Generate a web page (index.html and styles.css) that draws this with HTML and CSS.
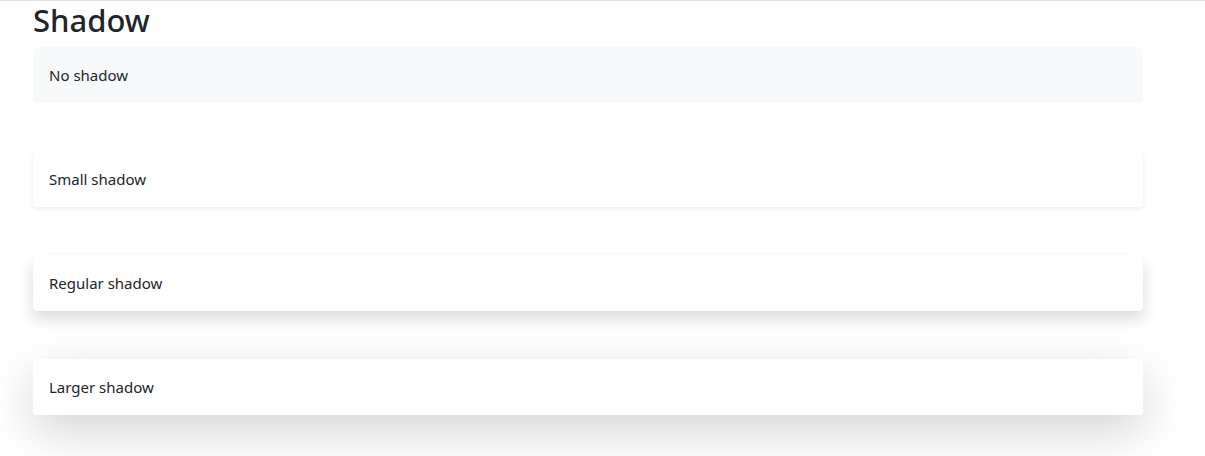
FILE: index.html
```html
<!DOCTYPE html>
<html lang="en">
<head>
    <meta charset="UTF-8">
    <meta name="viewport" content="width=device-width, initial-scale=1.0">
    <title>Shadow</title>
    <link rel="stylesheet" href="styles.css">
</head>
<body>
    <div class="page">
        <h2 class="title">Shadow</h2>
        <div class="box no-shadow">No shadow</div>
        <div class="box shadow-sm">Small shadow</div>
        <div class="box shadow">Regular shadow</div>
        <div class="box shadow-lg">Larger shadow</div>
    </div>
</body>
</html>
```
FILE: styles.css
```css
body {
    margin: 0;
    font-family: "Noto Sans", "Open Sans", sans-serif;
    font-size: 15px;
    line-height: 24px;
    color: #212529;
    background: #fff;
    border-top: 1px solid #dee2e6;
}

.page {
    width: 1110px;
    margin-left: 33px;
}

.title {
    margin: 0 0 8px;
    font-size: 31px;
    font-weight: 500;
    line-height: 38px;
}

.box {
    padding: 16px;
    margin-bottom: 48px;
    border-radius: 4px;
    background: #fff;
}

.no-shadow {
    background: #f8f9fa;
}

.shadow-sm {
    box-shadow: 0 2px 4px rgba(0, 0, 0, 0.075);
}

.shadow {
    box-shadow: 0 8px 16px rgba(0, 0, 0, 0.15);
}

.shadow-lg {
    box-shadow: 0 16px 48px rgba(0, 0, 0, 0.175);
}
```
